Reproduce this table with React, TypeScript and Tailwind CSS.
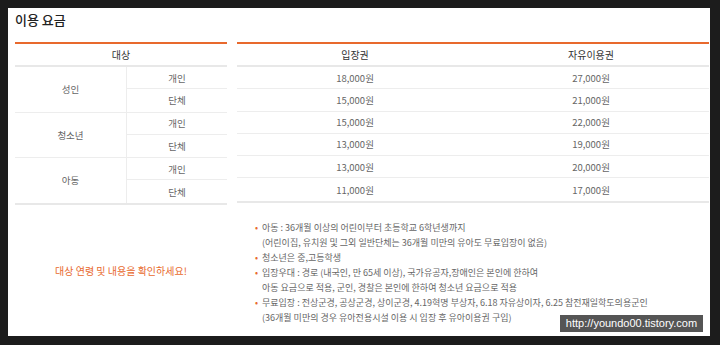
import clsx from "clsx";

const groups = [
  { name: "성인", rows: [["개인", "18,000원", "27,000원"], ["단체", "15,000원", "21,000원"]] },
  { name: "청소년", rows: [["개인", "15,000원", "22,000원"], ["단체", "13,000원", "19,000원"]] },
  { name: "아동", rows: [["개인", "13,000원", "20,000원"], ["단체", "11,000원", "17,000원"]] },
];

const notes = [
  ["아동 : 36개월 이상의 어린이부터 초등학교 6학년생까지", "(어린이집, 유치원 및 그외 일반단체는 36개월 미만의 유아도 무료입장이 없음)"],
  ["청소년은 중,고등학생"],
  ["입장우대 : 경로 (내국인, 만 65세 이상), 국가유공자,장애인은 본인에 한하여", "아동 요금으로 적용, 군인, 경찰은 본인에 한하여 청소년 요금으로 적용"],
  ["무료입장 : 전상군경, 공상군경, 상이군경, 4.19혁명 부상자, 6.18 자유상이자, 6.25 참전재일학도의용군인", "(36개월 미만의 경우 유아전용시설 이용 시 입장 후 유아이용권 구입)"],
];

const font = { fontFamily: '"Noto Sans CJK KR", "Noto Sans", sans-serif' };

export default function App() {
  const allRows = groups.flatMap((g) => g.rows);

  return (
    <div className="relative h-[345px] w-[720px] bg-[#1c1c1c] pl-[8px] pt-[8px]" style={font}>
      <div className="flex h-[328px] w-[702px] flex-col bg-white pl-[7px] pr-[1px]">
        <div className="h-[34px] pt-[2px] text-[13px] font-medium leading-[20px] text-[#222]">이용 요금</div>

        <div className="flex gap-[10px]">
          {/* 대상 */}
          <div className="w-[212px] border-t-2 border-[#e8692d] text-[9.5px] text-[#666]">
            <div className="flex h-[23px] items-center justify-center border-b-2 border-[#e8e8e8] text-[10px] text-[#333]">
              대상
            </div>
            <div className="border-b-2 border-[#e8e8e8]">
              {groups.map((g, gi) => (
                <div key={g.name} className={clsx("flex", gi < groups.length - 1 && "border-b border-[#ededed]")}>
                  <div className="flex w-[112px] items-center justify-center border-r border-[#ededed]">{g.name}</div>
                  <div className="flex-1">
                    {g.rows.map((r, ri) => (
                      <div
                        key={r[0]}
                        className={clsx("flex h-[22.3px] items-center justify-center", ri === 0 && "border-b border-[#ededed]")}
                      >
                        {r[0]}
                      </div>
                    ))}
                  </div>
                </div>
              ))}
            </div>
          </div>

          {/* 요금 */}
          <div className="flex-1 border-t-2 border-[#e8692d] text-[9.5px] text-[#666]">
            <div className="grid h-[23px] grid-cols-2 items-center border-b-2 border-[#e8e8e8] text-center text-[10px] text-[#333]">
              <span>입장권</span>
              <span>자유이용권</span>
            </div>
            <div className="border-b-2 border-[#e8e8e8]">
              {allRows.map((r, i) => (
                <div
                  key={i}
                  className={clsx(
                    "grid h-[22.3px] grid-cols-2 items-center text-center",
                    i < allRows.length - 1 && "border-b border-[#ededed]"
                  )}
                >
                  <span>{r[1]}</span>
                  <span>{r[2]}</span>
                </div>
              ))}
            </div>
          </div>
        </div>

        <div className="flex flex-1 gap-[10px]">
          <div className="flex w-[212px] items-center justify-center text-[10px] text-[#e8692d]">
            대상 연령 및 내용을 확인하세요!
          </div>
          <div className="flex-1 pl-[18px] pt-[15px] text-[9px] leading-[15px] text-[#666]">
            {notes.map((n, i) => (
              <div key={i} className="flex">
                <span className="w-[7px] text-[#e8692d]">•</span>
                <div>
                  {n.map((line) => (
                    <div key={line} className="whitespace-nowrap">{line}</div>
                  ))}
                </div>
              </div>
            ))}
          </div>
        </div>
      </div>

      <div
        className="absolute left-[560px] top-[315px] flex h-[17px] w-[143px] items-center justify-center bg-[#555] text-[11px] text-white"
        style={{ fontFamily: '"Liberation Sans", Arial, sans-serif' }}
      >
        http://youndo00.tistory.com
      </div>
    </div>
  );
}
